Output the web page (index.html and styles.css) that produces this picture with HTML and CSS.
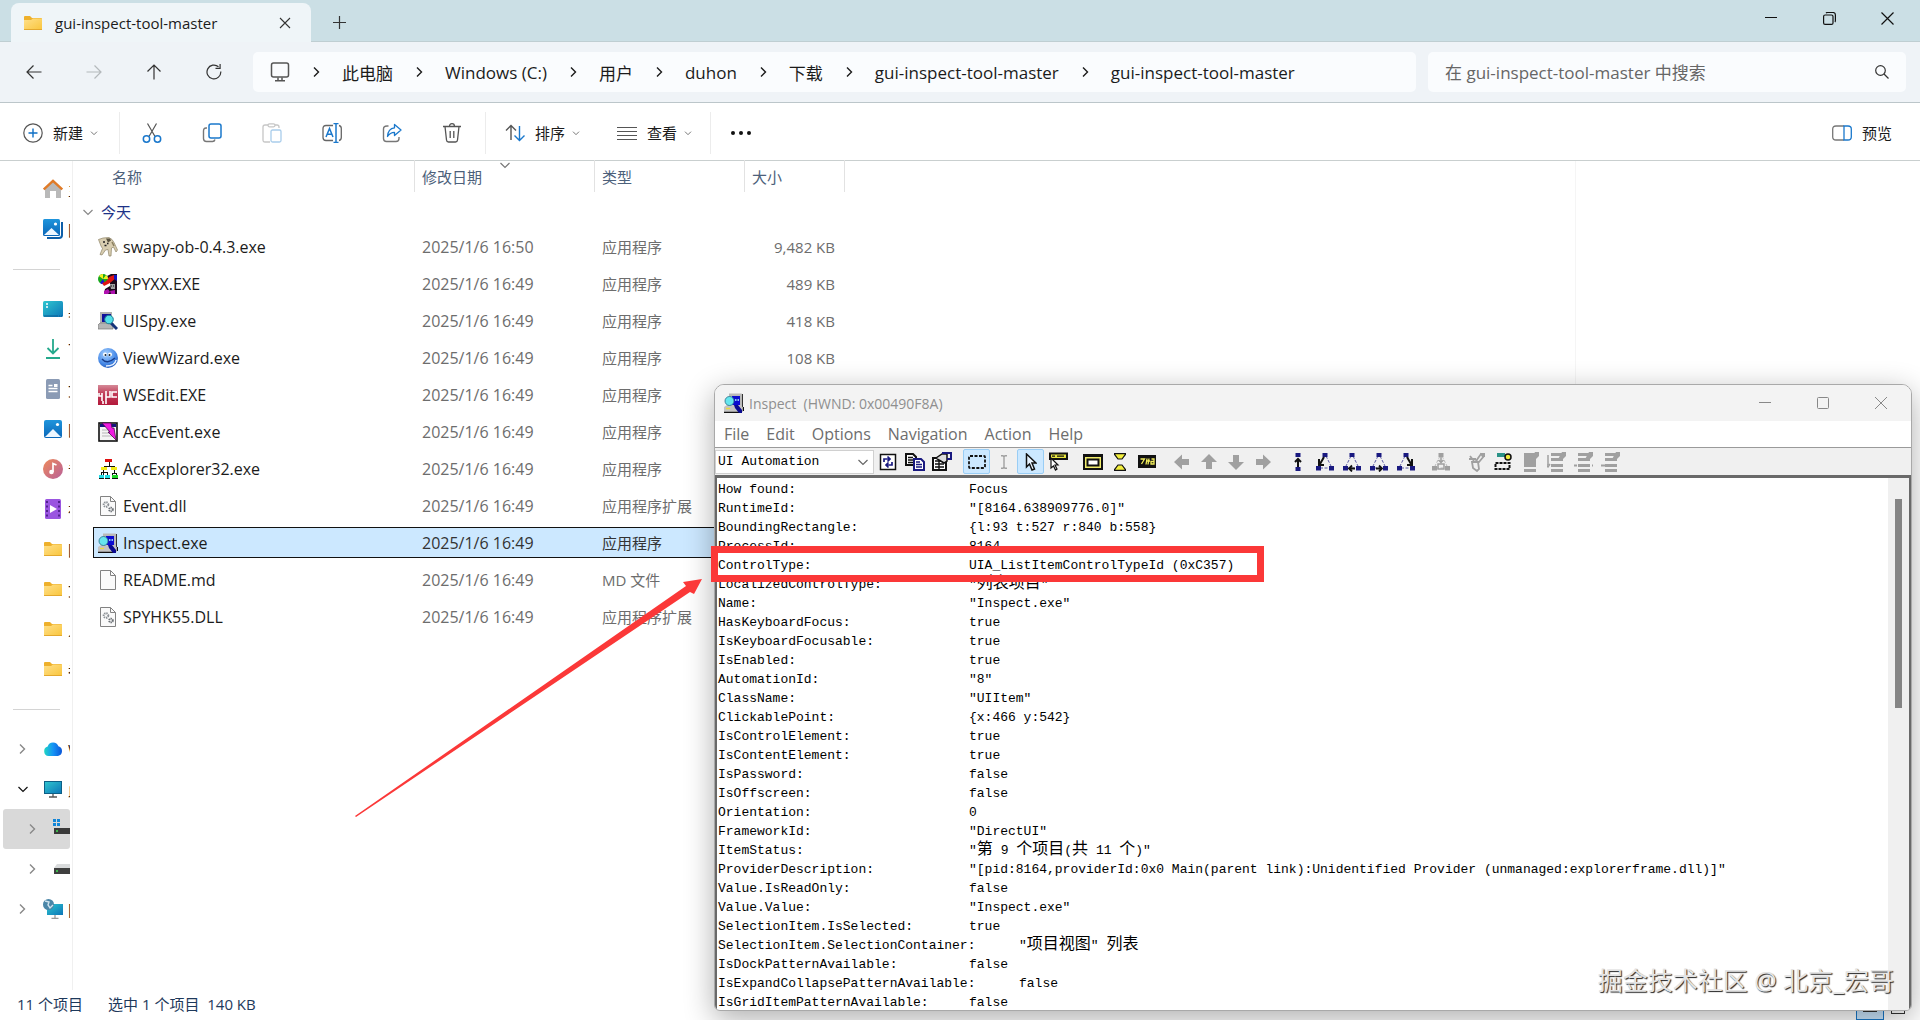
FILE: index.html
```html
<!DOCTYPE html>
<html lang="zh-CN">
<head>
	<meta charset="utf-8">
	<title>gui-inspect-tool-master</title>
	<link rel="stylesheet" href="styles.css">
</head>
<body>

<!-- shared icons -->
<svg class="defs" width="0" height="0">
	<defs>
		<linearGradient id="gFolder" x1="0" y1="0" x2="1" y2="1"><stop offset="0" stop-color="#ffe08a"/><stop offset="1" stop-color="#f9c53c"/></linearGradient>
		<linearGradient id="gBlue" x1="0" y1="0" x2="0" y2="1"><stop offset="0" stop-color="#1f95dc"/><stop offset="1" stop-color="#0a66b8"/></linearGradient>
		<linearGradient id="gTeal" x1="0" y1="0" x2="1" y2="1"><stop offset="0" stop-color="#2fc6cf"/><stop offset="1" stop-color="#0c76b8"/></linearGradient>
		<linearGradient id="gMusic" x1="0" y1="0" x2="1" y2="1"><stop offset="0" stop-color="#ee8a5a"/><stop offset="1" stop-color="#b8609a"/></linearGradient>
		<linearGradient id="gCloud" x1="0" y1="0" x2="1" y2="0"><stop offset="0" stop-color="#1fd6c4"/><stop offset=".5" stop-color="#1593f5"/><stop offset="1" stop-color="#0a56d8"/></linearGradient>
		<linearGradient id="gRed" x1="0" y1="0" x2="0" y2="1"><stop offset="0" stop-color="#d58a98"/><stop offset=".45" stop-color="#c03a56"/><stop offset="1" stop-color="#b3193b"/></linearGradient>
		<radialGradient id="gFace" cx=".4" cy=".3" r=".8"><stop offset="0" stop-color="#a9d3ff"/><stop offset=".6" stop-color="#4a8ce8"/><stop offset="1" stop-color="#1c50b0"/></radialGradient>
	</defs>
	<symbol id="folder" viewBox="0 0 20 20"><path d="M1 4q0-1 1-1h5l2 2h9q1 0 1 1v4H1z" fill="#eeb02b"/><path d="M1 7h7l2-1.500h9V17H1z" fill="url(#gFolder)"/><path d="M1 16.500h18" stroke="#e3a82e"/></symbol>
	<symbol id="picture" viewBox="0 0 20 20"><rect x="1" y="1" width="18" height="18" rx="2" fill="url(#gBlue)"/><path d="M2 18l8-8 8 8z" fill="#eef7ff"/><circle cx="14.500" cy="5.500" r="1.600" fill="#fff"/></symbol>
	<symbol id="chev-r" viewBox="0 0 10 12"><path d="M3 1.500L7.500 6 3 10.500" fill="none" stroke="currentColor" stroke-width="1.400"/></symbol>
	<symbol id="chev-d" viewBox="0 0 12 10"><path d="M1.500 3L6 7.500 10.500 3" fill="none" stroke="currentColor" stroke-width="1.200"/></symbol>
	<symbol id="dll" viewBox="0 0 20 20"><path d="M2.500.500h10l5 5v14h-15z" fill="#fafafa" stroke="#828282"/><path d="M12.500.500v5h5" fill="none" stroke="#828282"/><circle cx="8" cy="8.500" r="2.300" fill="none" stroke="#8c9196" stroke-width="2" stroke-dasharray="1.300 .700"/><circle cx="13" cy="13.500" r="1.800" fill="none" stroke="#6d7277" stroke-width="2" stroke-dasharray="1.200 .600"/></symbol>
	<symbol id="inspect" viewBox="0 0 20 20"><path d="M5 .5h12.500l1 1V14H5z" fill="#b9b9b9"/><path d="M18.500 1v13" stroke="#333"/><path d="M8 3h8v9H8z" fill="#0b0bd0"/><path d="M0 14l3-2h14l2 3v4H0z" fill="#c4c4c4"/><path d="M0 19.400h16M19.400 14v4" fill="none" stroke="#111" stroke-width="1.200"/><path d="M2 15.500h4" stroke="#e8dc40" stroke-width="1.300"/><path d="M10 12h4l4 5v3h-3l-4-5z" fill="#0a0a90"/><circle cx="5.500" cy="8" r="4.500" fill="#65e6ee" stroke="#2a6e86" stroke-width=".8"/><path d="M11 7h1.500m1 0H15" stroke="#bff" stroke-width="1.500"/></symbol>
	<symbol id="tree" viewBox="0 0 18 20"><path d="M8 4L3 14M10 4l5 10M4 16h10" fill="none" stroke="currentColor" stroke-dasharray="3 1.500" opacity=".7"/><path d="M6.500 1h5v4h-5zM0 14h5v4.500H0zM13 14h5v4.500h-5z" fill="currentColor"/></symbol>
	<symbol id="pen-list" viewBox="0 0 20 20"><path d="M4 1h12v3H4zM4 6h12v3H4zM4 12h12v3H4zM4 17h12v3H4z" fill="#a0a0a0"/><path d="M10 9l5-9h4v4l-5 5z" fill="#a0a0a0"/></symbol>
</svg>

<header class="tabstrip">
	<div class="tab">
		<svg width="20" height="20"><use href="#folder"/></svg>
		<span class="tab-title">gui-inspect-tool-master</span>
		<button class="tab-close" aria-label="关闭标签页"><svg width="12" height="12" viewBox="0 0 12 12"><path d="M1 1l10 10M11 1L1 11" stroke="#333" stroke-width="1.100"/></svg></button>
	</div>
	<button class="tab-new" aria-label="新标签页"><svg width="13" height="13" viewBox="0 0 13 13"><path d="M6.500 0v13M0 6.500h13" stroke="#333" stroke-width="1.200"/></svg></button>
	<div class="win-buttons">
		<button aria-label="最小化"><svg width="12" height="12" viewBox="0 0 12 12"><path d="M0 5.500h12" stroke="#111"/></svg></button>
		<button aria-label="还原"><svg width="13" height="13" viewBox="0 0 13 13" fill="none" stroke="#111" stroke-width="1.200"><rect x=".6" y="3" width="9.400" height="9.400" rx="1.500"/><path d="M3 1q.5-.5 1.500-.5h5.500q2.400 0 2.400 2.400V8.500q0 1-.5 1.500"/></svg></button>
		<button aria-label="关闭"><svg width="13" height="13" viewBox="0 0 13 13"><path d="M.5.500l12 12M12.500.500l-12 12" stroke="#111" stroke-width="1.200"/></svg></button>
	</div>
</header>

<nav class="navbar">
	<button class="nav-btn" aria-label="后退"><svg width="16" height="16" viewBox="0 0 16 16" fill="none" stroke="#333" stroke-width="1.200"><path d="M15.500 8H1M7.500 1.500L1 8l6.500 6.500"/></svg></button>
	<button class="nav-btn" aria-label="前进"><svg width="16" height="16" viewBox="0 0 16 16" fill="none" stroke="#b4b9bc" stroke-width="1.200"><path d="M.5 8H15M8.500 1.500L15 8l-6.500 6.500"/></svg></button>
	<button class="nav-btn" aria-label="向上"><svg width="16" height="16" viewBox="0 0 16 16" fill="none" stroke="#333" stroke-width="1.200"><path d="M8 15.500V1M1.500 7.500L8 1l6.500 6.500"/></svg></button>
	<button class="nav-btn" aria-label="刷新"><svg width="16" height="16" viewBox="0 0 16 16" fill="none" stroke="#333" stroke-width="1.200"><path d="M14.800 7.500A6.900 6.900 0 1 1 12.500 2.800M9.500 4.300h4.600V0"/></svg></button>
	<div class="address">
		<svg class="pc" width="20" height="20" viewBox="0 0 20 20" fill="none" stroke="#555" stroke-width="1.500"><rect x="1.500" y="1" width="17" height="14" rx="2"/><path d="M8 15.500v3M12 15.500v3M5 18.700h10"/></svg>
		<svg width="10" height="12"><use href="#chev-r"/></svg>
		<a href="#">此电脑</a>
		<svg width="10" height="12"><use href="#chev-r"/></svg>
		<a href="#">Windows (C:)</a>
		<svg width="10" height="12"><use href="#chev-r"/></svg>
		<a href="#">用户</a>
		<svg width="10" height="12"><use href="#chev-r"/></svg>
		<a href="#">duhon</a>
		<svg width="10" height="12"><use href="#chev-r"/></svg>
		<a href="#">下载</a>
		<svg width="10" height="12"><use href="#chev-r"/></svg>
		<a href="#">gui-inspect-tool-master</a>
		<svg width="10" height="12"><use href="#chev-r"/></svg>
		<a href="#">gui-inspect-tool-master</a>
	</div>
	<div class="search">
		<input type="text" aria-label="搜索" placeholder="在 gui-inspect-tool-master 中搜索">
		<svg width="14" height="14" viewBox="0 0 14 14" fill="none" stroke="#333" stroke-width="1.200"><circle cx="5.500" cy="5.500" r="4.800"/><path d="M9 9l4.500 4.500"/></svg>
	</div>
</nav>

<div class="commands">
	<button class="cmd new"><svg width="20" height="20" viewBox="0 0 20 20" fill="none"><circle cx="10" cy="10" r="9.200" stroke="#555" stroke-width="1.200"/><path d="M10 5.500v9M5.500 10h9" stroke="#0f6fc5" stroke-width="1.400"/></svg>新建<svg class="arr" width="8" height="8"><use href="#chev-d"/></svg></button>
	<span class="sep"></span>
	<button class="tool" aria-label="剪切"><svg width="20" height="22" viewBox="0 0 20 20" fill="none"><path d="M5.500.500l7.500 13M14.500.500L7 13.500" stroke="#555" stroke-width="1.200"/><circle cx="4.500" cy="16" r="3.200" stroke="#1a78cc" stroke-width="1.500"/><circle cx="15.500" cy="16" r="3.200" stroke="#1a78cc" stroke-width="1.500"/></svg></button>
	<button class="tool" aria-label="复制"><svg width="20" height="20" viewBox="0 0 20 20" fill="none"><path d="M5 5H4Q1.500 5 1.500 8v7.500q0 3 3 3h6q2 0 2.500-2" stroke="#777" stroke-width="1.400"/><rect x="7" y="1" width="12" height="14" rx="2" stroke="#1a78cc" stroke-width="1.500"/></svg></button>
	<button class="tool" aria-label="粘贴"><svg width="20" height="20" viewBox="0 0 20 20" fill="none" stroke-width="1.300"><path d="M8 19H3q-2 0-2-2V4q0-2 2-2h3M13 2h2q2 0 2 2v1" stroke="#c6c6c6"/><rect x="6" y=".8" width="7" height="3" rx="1.500" stroke="#c6c6c6"/><rect x="9" y="7" width="10" height="12" rx="1.500" stroke="#a9cdeb"/></svg></button>
	<button class="tool" aria-label="重命名"><svg width="20" height="20" viewBox="0 0 20 20" fill="none"><path d="M11 2.500H4q-3 0-3 3v9q0 3 3 3h7M17 2.500q2.300.5 2.300 3v9q0 2.500-2.300 3" stroke="#666" stroke-width="1.300"/><path d="M14 .500v19M11.500.600h5M11.500 19.400h5" stroke="#1a78cc" stroke-width="1.500"/><path d="M4 14L7.500 5.500 11 14M5.200 11.200h4.600" stroke="#1a78cc" stroke-width="1.500"/></svg></button>
	<button class="tool" aria-label="共享"><svg width="20" height="20" viewBox="0 0 20 20" fill="none"><path d="M6.500 3H5Q1.500 3 1.500 6v9.500q0 3 3 3h9.500q3 0 3-3V14" stroke="#777" stroke-width="1.400"/><path d="M12.500 1.500L19 7l-6.500 5.500V9.300Q8 9.300 5.500 13.500 6 5.500 12.500 4.800z" stroke="#1a78cc" stroke-width="1.300" stroke-linejoin="round"/></svg></button>
	<button class="tool" aria-label="删除"><svg width="20" height="20" viewBox="0 0 20 20" fill="none" stroke="#555" stroke-width="1.300"><path d="M1 3.500h18M7.500 3.500q0-2.800 2.500-2.800t2.500 2.800M3 3.500L4.500 17q.2 2 2 2h7q1.800 0 2-2L17 3.500M8.200 8v7M11.800 8v7"/></svg></button>
	<span class="sep"></span>
	<button class="cmd"><svg width="20" height="20" viewBox="0 0 20 20" fill="none" stroke-width="1.400"><path d="M6 17V3M1 7.500l5-5 5 5" stroke="#555"/><path d="M14.500 3v14M9.500 12.500l5 5 5-5" stroke="#1a78cc"/></svg>排序<svg class="arr" width="8" height="8"><use href="#chev-d"/></svg></button>
	<button class="cmd"><svg width="20" height="20" viewBox="0 0 20 20" stroke="#555"><path d="M0 4.500h20M0 8.500h20M0 12.500h20M0 16.500h20"/></svg>查看<svg class="arr" width="8" height="8"><use href="#chev-d"/></svg></button>
	<span class="sep"></span>
	<button class="tool" aria-label="更多"><svg width="22" height="20" viewBox="0 0 22 20" fill="#111"><circle cx="3" cy="10" r="2"/><circle cx="11" cy="10" r="2"/><circle cx="19" cy="10" r="2"/></svg></button>
	<button class="cmd preview"><svg width="20" height="20" viewBox="0 0 20 20" fill="none" stroke-width="1.300"><path d="M12 3H4Q.700 3 .700 6v8q0 3 3.300 3h8" stroke="#777"/><path d="M12 3h4q3.300 0 3.300 3v8q0 3-3.300 3h-4z" stroke="#1a78cc"/></svg>预览</button>
</div>

<main class="explorer">
	<aside class="sidebar">
		<a href="#" class="place"><svg width="20" height="20" viewBox="0 0 20 20"><path d="M2 9l8-7 8 7v10h-5v-7H7v7H2z" fill="#b9b9b9"/><path d="M.8 10.500L10 1.800l9.200 8.700" fill="none" stroke="#e07b28" stroke-width="2.400"/></svg><span>主页</span></a>
		<a href="#" class="place"><svg width="20" height="20" viewBox="0 0 20 20"><path d="M4 19h12q3 0 3-3V3" fill="none" stroke="#0d5ea8" stroke-width="2"/><rect x="0" y="0" width="17" height="17" rx="1.500" fill="url(#gBlue)"/><path d="M1 16l7.500-7 7.500 7z" fill="#eef7ff"/><circle cx="12.500" cy="5" r="1.600" fill="#fff"/></svg><span>图库</span></a>
		<hr>
		<a href="#" class="place"><svg width="20" height="20" viewBox="0 0 20 20"><rect x="0" y="2" width="20" height="16" rx="1.500" fill="url(#gTeal)"/><path d="M3 5h2M3 8h2" stroke="#fff" stroke-width="1.600"/><path d="M1 17h18" stroke="#0c5a94" stroke-dasharray="14 1 1 1"/></svg><span>桌面</span></a>
		<a href="#" class="place"><svg width="20" height="20" viewBox="0 0 20 20" fill="none" stroke="#25a98c" stroke-width="1.800"><path d="M10 0v14M4.500 9L10 14.500 15.500 9M3 19h14"/></svg><span>下载</span></a>
		<a href="#" class="place"><svg width="20" height="20" viewBox="0 0 20 20"><rect x="3" y="0" width="14" height="20" rx="1.500" fill="#8b9bb5"/><path d="M5.500 6.500h4M5.500 9.500h9M5.500 12.500h9" stroke="#fff" stroke-width="1.300"/><rect x="11" y="5" width="3.500" height="3" fill="#fff"/></svg><span>文档</span></a>
		<a href="#" class="place"><svg width="20" height="20"><use href="#picture"/></svg><span>图片</span></a>
		<a href="#" class="place"><svg width="20" height="20" viewBox="0 0 20 20"><circle cx="10" cy="10" r="10" fill="url(#gMusic)"/><path d="M10 13V4.500l3.500 1.500" fill="none" stroke="#fff" stroke-width="1.700"/><circle cx="8.500" cy="13" r="2.300" fill="#fff"/></svg><span>音乐</span></a>
		<a href="#" class="place"><svg width="20" height="20" viewBox="0 0 20 20"><rect x="2" y="0" width="16" height="20" rx="1.500" fill="#9a55e0"/><path d="M4 2v17M16 2v17" stroke="#4a1f86" stroke-width="1.800" stroke-dasharray="2 2.500"/><path d="M7 6l7 4-7 4z" fill="#fff"/></svg><span>视频</span></a>
		<a href="#" class="place"><svg width="20" height="20"><use href="#folder"/></svg><span>图</span></a>
		<a href="#" class="place"><svg width="20" height="20"><use href="#folder"/></svg><span>文</span></a>
		<a href="#" class="place"><svg width="20" height="20"><use href="#folder"/></svg><span>人</span></a>
		<a href="#" class="place"><svg width="20" height="20"><use href="#folder"/></svg><span>者</span></a>
		<hr>
		<a href="#" class="place open"><svg class="tw" width="10" height="12"><use href="#chev-r"/></svg><svg width="20" height="20" viewBox="0 0 20 20"><path d="M5.500 17a4.800 4.800 0 0 1-.8-9.400 5.600 5.600 0 0 1 10.700-.3A5 5 0 0 1 15 17z" fill="url(#gCloud)"/></svg><span>WPS</span></a>
		<a href="#" class="place open"><svg class="tw dark" width="12" height="10"><use href="#chev-d"/></svg><svg width="20" height="20" viewBox="0 0 20 20"><rect x="1.500" y="2.500" width="17" height="12" fill="url(#gTeal)" stroke="#0d5f86"/><path d="M10 15v2.500M6 18h8" stroke="#555" stroke-width="1.300"/></svg><span>此电脑</span></a>
		<a href="#" class="place open deep current"><svg class="tw" width="10" height="12"><use href="#chev-r"/></svg><svg width="20" height="20" viewBox="0 0 20 20"><path d="M0 0h3v3H0zM4 0h3v3H4zM0 4h3v3H0zM4 4h3v3H4z" fill="#1286d8"/><path d="M1 9h19v6H1z" fill="#3a3a3a"/><path d="M3 12h2" stroke="#3fe052" stroke-width="1.500"/></svg><span>C</span></a>
		<a href="#" class="place open deep"><svg class="tw" width="10" height="12"><use href="#chev-r"/></svg><svg width="20" height="20" viewBox="0 0 20 20"><path d="M4 5h16v4H1z" fill="#d9dbdc"/><path d="M1 9h19v6H1z" fill="#3f3f3f"/><path d="M3 12h2" stroke="#3fe052" stroke-width="1.500"/></svg><span>D</span></a>
		<a href="#" class="place open"><svg class="tw" width="10" height="12"><use href="#chev-r"/></svg><svg width="20" height="20" viewBox="0 0 20 20"><rect x="4" y="5" width="16" height="11" fill="url(#gTeal)"/><path d="M12 16v3M8.500 19.300h7" stroke="#999" stroke-width="1.300"/><circle cx="5.500" cy="5.500" r="5.500" fill="#4b86a8"/><path d="M2 2l4 1-1 3 2 3 3-3" fill="none" stroke="#cfe3ee" stroke-width="1.400"/></svg><span>网络</span></a>
	</aside>

	<section class="files">
		<table class="list">
			<colgroup><col class="c-gut"><col class="c-name"><col class="c-date"><col class="c-type"><col class="c-size"></colgroup>
			<thead>
				<tr><td></td><th class="h-name">名称</th><th class="sorted"><svg class="sort" width="12" height="10"><use href="#chev-d"/></svg>修改日期</th><th>类型</th><th>大小</th></tr>
			</thead>
			<tbody>
				<tr class="group"><td colspan="5"><button><svg width="12" height="10"><use href="#chev-d"/></svg>今天</button></td></tr>
				<tr><td></td><td class="name"><svg width="20" height="20" viewBox="0 0 20 20"><path d="M.5 2.500L5 1l6-.5 3 2 2 3 3.500 7.500-1.500 2-2.500-5-2 1-.5 8H11l-1-6.500-2.500.5L4 18l-2-.5 2.500-6L3 9z" fill="#d8cdb0" stroke="#8d8266" stroke-width=".7"/><path d="M8 1.500h4l1 2-3 2z" fill="#57503e"/><path d="M5 5h2M9 6.500h1.500M6.500 8.500h2" stroke="#222" stroke-width="1.500"/><path d="M14 5l2 4" stroke="#8a7f60" stroke-width="1.500"/></svg>swapy-ob-0.4.3.exe</td><td>2025/1/6 16:50</td><td class="zh">应用程序</td><td class="size">9,482 KB</td></tr>
				<tr><td></td><td class="name"><svg width="20" height="20" viewBox="0 0 20 20"><path d="M9 2l4-2h6v20H6l1-5 5-3V7z" fill="#1c0a1c"/><circle cx="5" cy="5" r="5" fill="#17a81c"/><path d="M5 5L1 2a5 5 0 0 1 4-2zM5 5h5a5 5 0 0 0-2-4z" fill="#f5ee20"/><path d="M5 5L2 9a5 5 0 0 0 5 1z" fill="#1616d8"/><path d="M4 9q5-1 7-6l5-2 2 3-6 5-6 3z" fill="#e01414"/><path d="M6 17l4-2 2 3-2 2H6zM12 17l5-1v4h-4z" fill="#b012b0"/><path d="M16 1h3v6l-3-2z" fill="#1414c0"/><path d="M12 10h5v5h-4z" fill="#a0a0a0"/><path d="M13 12h1m1 0h1" stroke="#111"/></svg>SPYXX.EXE</td><td>2025/1/6 16:49</td><td class="zh">应用程序</td><td class="size">489 KB</td></tr>
				<tr><td></td><td class="name"><svg width="20" height="20" viewBox="0 0 20 20"><path d="M2 1h12v11H2z" fill="#b0b0b0"/><path d="M4 3h9v8H4z" fill="#10109c"/><path d="M0 14l2-2h13v6H0z" fill="#b5b5b5" stroke="#777" stroke-width=".7"/><path d="M13 12l6 6" stroke="#15337a" stroke-width="3"/><circle cx="11" cy="8.500" r="4.300" fill="#53dfe8" stroke="#1b7a92"/></svg>UISpy.exe</td><td>2025/1/6 16:49</td><td class="zh">应用程序</td><td class="size">418 KB</td></tr>
				<tr><td></td><td class="name"><svg width="20" height="20" viewBox="0 0 20 20"><circle cx="10" cy="10" r="10" fill="url(#gFace)"/><circle cx="7" cy="6.500" r="2" fill="#fff"/><circle cx="12" cy="6.500" r="2" fill="#fff"/><circle cx="7.500" cy="7" r="1" fill="#123"/><circle cx="11.500" cy="7" r="1" fill="#123"/><path d="M4 11q5 6 13-1" fill="none" stroke="#173c8a" stroke-width="1.400"/><path d="M8 18q9 0 10-6" fill="none" stroke="#e8f2ff" stroke-width="1.500"/></svg>ViewWizard.exe</td><td>2025/1/6 16:49</td><td class="zh">应用程序</td><td class="size">108 KB</td></tr>
				<tr><td></td><td class="name"><svg width="20" height="20" viewBox="0 0 20 20"><rect width="20" height="20" fill="url(#gRed)"/><path d="M1 8v3h3v3M4 8v8M8 6v6h4V6M8 12v7M19 7h-5v5h5M5 16v3" fill="none" stroke="#fff" stroke-width="1.600"/></svg>WSEdit.EXE</td><td>2025/1/6 16:49</td><td class="zh">应用程序</td><td class="size"></td></tr>
				<tr><td></td><td class="name"><svg width="20" height="20" viewBox="0 0 20 20"><rect x="1" y="1" width="18" height="18" fill="#f4f4f4" stroke="#111" stroke-width="1.600"/><path d="M2 2h16v3H2z" fill="#14147e"/><path d="M4 8h7M4 11h9M4 14h11" stroke="#b5b5b5"/><path d="M4 1h9l1 5h2l2 12-8-8h2z" fill="#f01ae0" stroke="#510a50" stroke-width=".8"/></svg>AccEvent.exe</td><td>2025/1/6 16:49</td><td class="zh">应用程序</td><td class="size"></td></tr>
				<tr><td></td><td class="name"><svg width="20" height="20" viewBox="0 0 20 20" shape-rendering="crispEdges"><path d="M11 3v4M6 10V7h10v3M5 11v5M3 16v-3h6v3M16 11v3M14 16v-2h4v2" fill="none" stroke="#111"/><path d="M7 0h7v3H7z" fill="#e01010"/><path d="M3 8h6v3H3zM13 8h6v3h-6z" fill="#f2ea18"/><path d="M1 16h5v3H1zM7 16h5v3H7z" fill="#22dbe6"/><path d="M14 16h6v3h-6z" fill="#20d828"/><path d="M1 19h5M7 19h5M14 19h6" stroke="#111"/></svg>AccExplorer32.exe</td><td>2025/1/6 16:49</td><td class="zh">应用程序</td><td class="size"></td></tr>
				<tr><td></td><td class="name"><svg width="20" height="20"><use href="#dll"/></svg>Event.dll</td><td>2025/1/6 16:49</td><td class="zh">应用程序扩展</td><td class="size"></td></tr>
				<tr class="selected"><td></td><td class="name"><svg width="20" height="20"><use href="#inspect"/></svg>Inspect.exe</td><td>2025/1/6 16:49</td><td class="zh">应用程序</td><td class="size"></td></tr>
				<tr><td></td><td class="name"><svg width="20" height="20" viewBox="0 0 20 20"><path d="M2.500.500h10l5 5v14h-15z" fill="#fafafa" stroke="#828282"/><path d="M12.500.500v5h5" fill="none" stroke="#828282"/></svg>README.md</td><td>2025/1/6 16:49</td><td class="zh">MD 文件</td><td class="size"></td></tr>
				<tr><td></td><td class="name"><svg width="20" height="20"><use href="#dll"/></svg>SPYHK55.DLL</td><td>2025/1/6 16:49</td><td class="zh">应用程序扩展</td><td class="size"></td></tr>
			</tbody>
		</table>
	</section>
	<div class="preview-pane"></div>
</main>

<footer class="status">
	<span>11 个项目</span>
	<span>选中 1 个项目&nbsp; 140 KB</span>
	<div class="views">
		<button class="on" aria-label="详细信息"><svg width="14" height="12" viewBox="0 0 14 12"><path d="M0 1.500h14M0 5.500h14M0 9.500h14" stroke="#333"/></svg></button>
		<button aria-label="大图标"><svg width="14" height="12" viewBox="0 0 14 12"><rect x=".5" y=".5" width="13" height="11" fill="none" stroke="#333"/></svg></button>
	</div>
</footer>

<!-- floating Inspect window -->
<section class="inspect">
	<header class="i-title">
		<svg width="20" height="20"><use href="#inspect"/></svg>
		<span>Inspect&nbsp; (HWND: 0x00490F8A)</span>
		<div class="win-buttons">
			<button aria-label="最小化"><svg width="12" height="12" viewBox="0 0 12 12"><path d="M0 5.500h12" stroke="#888"/></svg></button>
			<button aria-label="最大化"><svg width="12" height="12" viewBox="0 0 12 12"><rect x=".5" y=".5" width="11" height="11" rx="1" fill="none" stroke="#888"/></svg></button>
			<button aria-label="关闭"><svg width="12" height="12" viewBox="0 0 12 12"><path d="M0 0l12 12M12 0L0 12" stroke="#888"/></svg></button>
		</div>
	</header>
	<div class="i-menu">
		<button>File</button><button>Edit</button><button>Options</button><button>Navigation</button><button>Action</button><button>Help</button>
	</div>
	<div class="i-tools">
		<div class="combo">
			<select aria-label="模式"><option>UI Automation</option></select>
			<svg width="12" height="10"><use href="#chev-d"/></svg>
		</div>
		<button aria-label="Refresh"><svg width="18" height="18" viewBox="0 0 18 18"><rect x="1.500" y="1.500" width="15" height="15" fill="#fff" stroke="#111" stroke-width="1.500"/><path d="M5 9V6h5M8.500 3.500L11 6 8.500 8.500M13 9v3H8M9.500 9.500L7 12l2.500 2.500" fill="none" stroke="#191980" stroke-width="1.700"/></svg></button>
		<button aria-label="Copy"><svg width="20" height="18" viewBox="0 0 20 18"><path d="M1 1h7l3 3v8H1z" fill="#fff" stroke="#111" stroke-width="2"/><path d="M3 4.500h5M3 7h5M3 9.500h5" stroke="#111" stroke-width="1.300"/><path d="M9 6h7l3 3v8H9z" fill="#fff" stroke="#191980" stroke-width="2"/><path d="M11 9h4M11 11.500h6M11 14h6" stroke="#191980" stroke-width="1.300"/></svg></button>
		<button aria-label="Properties"><svg width="20" height="20" viewBox="0 0 20 20"><rect x="1" y="6" width="13" height="12" fill="#fff" stroke="#111" stroke-width="2"/><path d="M3 9h9M3 12h9M3 15h9M7 7v11" stroke="#111" stroke-width="1.400"/><path d="M4 6l6-4h5v7l-3 2-5-3z" fill="#ddd" stroke="#111" stroke-width="1.500"/><path d="M10 1h9v6h-4" fill="none" stroke="#191980" stroke-width="2"/></svg></button>
		<i class="gap"></i>
		<button class="on" aria-label="Show highlight rectangle"><svg width="18" height="14" viewBox="0 0 18 14"><rect x="1" y="1" width="16" height="12" rx="1" fill="none" stroke="#111" stroke-width="1.800" stroke-dasharray="3 1.500"/></svg></button>
		<button aria-label="Show caret"><svg width="8" height="14" viewBox="0 0 8 14"><path d="M1 .700h2l1 1 1-1h2M4 1.500v11M1 13.300h2l1-1 1 1h2" fill="none" stroke="#a0a0a0" stroke-width="1.400"/></svg></button>
		<button class="on" aria-label="Watch cursor"><svg width="12" height="18" viewBox="0 0 12 18"><path d="M1.500 1v13l3-3 2.500 6 2.500-1-2.500-6h4z" fill="#e8f4ff" stroke="#111" stroke-width="1.500"/></svg></button>
		<button aria-label="Watch tooltips"><svg width="20" height="20" viewBox="0 0 20 20"><path d="M2 1.500h17v5.500H2z" fill="#e8e640" stroke="#111" stroke-width="2"/><path d="M4 4.200h3M9 4.200h7" stroke="#111" stroke-width="1.300"/><path d="M3 6v10l2.500-2 2 4 1.500-1-2-4h3z" fill="#fff" stroke="#111" stroke-width="1.200"/></svg></button>
		<i class="gap"></i>
		<button aria-label="Show window"><svg width="20" height="16" viewBox="0 0 20 16"><path d="M0 0h20v16H0z" fill="#111"/><path d="M2 3h16v11H2z" fill="#f2ee6c"/><rect x="4.500" y="5.500" width="11" height="6" fill="#fff" stroke="#111" stroke-width="2"/></svg></button>
		<button aria-label="Topmost"><svg width="12" height="18" viewBox="0 0 12 18"><path d="M0 .700h12L8 6H4zM0 17.300h12L8 12H4z" fill="#f2ee3c" stroke="#111" stroke-width="1.200"/></svg></button>
		<button aria-label="Information"><svg width="18" height="13" viewBox="0 0 18 13"><path d="M0 0h18v13H0z" fill="#111"/><path d="M2.500 4h4l-3 5M9 3.500L8 9.500M11 3.500l-1 6M8 6h4M13.500 4H16v5h-3V6.500h3" fill="none" stroke="#f2ee5c" stroke-width="1.300"/></svg></button>
		<i class="gap"></i>
		<button aria-label="Back"><svg width="16" height="16" viewBox="0 0 16 16"><path d="M0 8l8-7.500V5h7v6H8v4.500z" fill="#a0a0a0"/></svg></button>
		<button aria-label="Up"><svg width="16" height="16" viewBox="0 0 16 16"><path d="M8 0l8 8h-5v7H5V8H0z" fill="#a0a0a0"/></svg></button>
		<button aria-label="Down"><svg width="16" height="16" viewBox="0 0 16 16"><path d="M8 16L0 8h5V1h6v7h5z" fill="#a0a0a0"/></svg></button>
		<button aria-label="Forward"><svg width="16" height="16" viewBox="0 0 16 16"><path d="M16 8L8 .500V5H1v6h7v4.500z" fill="#a0a0a0"/></svg></button>
		<i class="gap"></i>
		<button aria-label="Parent"><svg width="18" height="20" viewBox="0 0 18 20"><path d="M6.500 1h5v4h-5zM6.500 15h5v4h-5z" fill="#191980"/><path d="M9 15V7M6 10l3-3 3 3" fill="none" stroke="#111" stroke-width="2"/></svg></button>
		<button class="navy" aria-label="First child"><svg width="18" height="20" viewBox="0 0 18 20"><use href="#tree"/><path d="M8 5l-4 7M3 7v6h5" fill="none" stroke="#111" stroke-width="2"/></svg></button>
		<button class="navy" aria-label="Previous sibling"><svg width="18" height="20" viewBox="0 0 18 20"><use href="#tree"/><path d="M12 16.500H6M9 13.500l-3 3 3 3" fill="none" stroke="#111" stroke-width="1.800"/></svg></button>
		<button class="navy" aria-label="Next sibling"><svg width="18" height="20" viewBox="0 0 18 20"><use href="#tree"/><path d="M6 16.500h6M9 13.500l3 3-3 3" fill="none" stroke="#111" stroke-width="1.800"/></svg></button>
		<button class="navy" aria-label="Last child"><svg width="18" height="20" viewBox="0 0 18 20"><use href="#tree"/><path d="M10 5l4 7M15 7v6h-5" fill="none" stroke="#111" stroke-width="2"/></svg></button>
		<i class="gap"></i>
		<button class="dim" aria-label="Tree"><svg width="20" height="20" viewBox="0 0 18 20"><use href="#tree"/><path d="M9 5v5M6.500 8L9 10.500 11.500 8M6 12h6v5H6z" fill="none" stroke="#a0a0a0" stroke-width="1.500"/></svg></button>
		<i class="gap"></i>
		<button aria-label="Invoke"><svg width="18" height="20" viewBox="0 0 18 20"><path d="M2 7h7M3 4l4 5M5 10l1 6 4 3 2-2-1-7zM9 9l5-7 3 2-5 6z" fill="none" stroke="#a0a0a0" stroke-width="1.800"/><path d="M13 1h5v4h-3z" fill="#a0a0a0"/></svg></button>
		<button aria-label="Set focus"><svg width="18" height="20" viewBox="0 0 18 20"><path d="M3 1h8v4H3z" fill="#2b9387"/><circle cx="14" cy="5" r="3" fill="#f2ee3c" stroke="#111" stroke-width="1.500"/><rect x="1.500" y="11" width="14" height="6" fill="none" stroke="#111" stroke-width="2" stroke-dasharray="3 1"/></svg></button>
		<button aria-label="Select"><svg width="20" height="20" viewBox="0 0 20 20"><path d="M4 3h12v12H4z" fill="#a0a0a0"/><use href="#pen-list"/></svg></button>
		<button aria-label="Extend selection"><svg width="20" height="20" viewBox="0 0 20 20"><use href="#pen-list"/><path d="M1 3v10M-1 12l2 3 2-3" stroke="#a0a0a0" fill="none" stroke-width="1.500"/></svg></button>
		<button aria-label="Add to selection"><svg width="20" height="20" viewBox="0 0 20 20"><use href="#pen-list"/><path d="M0 13.500h3M18 13.500h1" stroke="#a0a0a0" stroke-width="2"/></svg></button>
		<button aria-label="Remove from selection"><svg width="20" height="20" viewBox="0 0 20 20"><use href="#pen-list"/><path d="M0 13.500h4" stroke="#a0a0a0" stroke-width="2"/></svg></button>
	</div>
	<div class="i-body">
		<table class="props">
			<colgroup><col class="p-key"><col></colgroup>
			<tbody>
				<tr><th>How found:</th><td>Focus</td></tr>
				<tr><th>RuntimeId:</th><td>"[8164.638909776.0]"</td></tr>
				<tr><th>BoundingRectangle:</th><td>{l:93 t:527 r:840 b:558}</td></tr>
				<tr><th>ProcessId:</th><td>8164</td></tr>
				<tr><th>ControlType:</th><td>UIA_ListItemControlTypeId (0xC357)</td></tr>
				<tr><th>LocalizedControlType:</th><td>"<b>列表项目</b>"</td></tr>
				<tr><th>Name:</th><td>"Inspect.exe"</td></tr>
				<tr><th>HasKeyboardFocus:</th><td>true</td></tr>
				<tr><th>IsKeyboardFocusable:</th><td>true</td></tr>
				<tr><th>IsEnabled:</th><td>true</td></tr>
				<tr><th>AutomationId:</th><td>"8"</td></tr>
				<tr><th>ClassName:</th><td>"UIItem"</td></tr>
				<tr><th>ClickablePoint:</th><td>{x:466 y:542}</td></tr>
				<tr><th>IsControlElement:</th><td>true</td></tr>
				<tr><th>IsContentElement:</th><td>true</td></tr>
				<tr><th>IsPassword:</th><td>false</td></tr>
				<tr><th>IsOffscreen:</th><td>false</td></tr>
				<tr><th>Orientation:</th><td>0</td></tr>
				<tr><th>FrameworkId:</th><td>"DirectUI"</td></tr>
				<tr><th>ItemStatus:</th><td>"<b>第</b> 9 <b>个项目</b>(<b>共</b> 11 <b>个</b>)"</td></tr>
				<tr><th>ProviderDescription:</th><td>"[pid:8164,providerId:0x0 Main(parent link):Unidentified Provider (unmanaged:explorerframe.dll)]"</td></tr>
				<tr><th>Value.IsReadOnly:</th><td>false</td></tr>
				<tr><th>Value.Value:</th><td>"Inspect.exe"</td></tr>
				<tr><th>SelectionItem.IsSelected:</th><td>true</td></tr>
				<tr><th>SelectionItem.SelectionContainer:</th><td class="far">"<b>项目视图</b>" <b>列表</b></td></tr>
				<tr><th>IsDockPatternAvailable:</th><td>false</td></tr>
				<tr><th>IsExpandCollapsePatternAvailable:</th><td class="far">false</td></tr>
				<tr><th>IsGridItemPatternAvailable:</th><td>false</td></tr>
			</tbody>
		</table>
		<div class="scroll"><div class="thumb"></div></div>
	</div>
</section>

<!-- annotations -->
<div class="mark"></div>
<svg class="arrow" width="350" height="240" viewBox="0 0 350 240"><path d="M1 238L332 8l-3-4 19-3-8 15-4-2L2 239z" fill="#fb3838"/></svg>
<div class="watermark">掘金技术社区 @ 北京_宏哥</div>

</body>
</html>
```
FILE: styles.css
```css
*{
	box-sizing: border-box;
}
body{
	margin: 0;
	height: 100vh;
	position: relative;
	overflow: hidden;
	display: flex;
	flex-direction: column;
	background: #fff;
	color: #1b1b1b;
	font: 15px "Open Sans", "Noto Sans CJK SC", sans-serif;
}
button, input, select{
	font: inherit;
	color: inherit;
	background: none;
	border: 0;
	padding: 0;
	margin: 0;
}
a{
	color: inherit;
	text-decoration: none;
}
svg{
	display: block;
	flex: none;
}
.defs{
	position: absolute;
}

/* tab strip */
.tabstrip{
	display: flex;
	height: 42px;
	flex: none;
	padding-left: 11px;
	background: #cbdfe5;
	border-bottom: 1px solid #bfced2;
}
.tab{
	display: flex;
	align-items: center;
	width: 300px;
	height: 39px;
	margin-top: 3px;
	padding: 0 20px 0 12px;
	background: #eff5f8;
	border-radius: 8px 8px 0 0;
}
.tab-title{
	flex: 1;
	padding-left: 12px;
}
.tab-new{
	display: flex;
	align-items: center;
	padding: 4px 22px 0;
}
.win-buttons{
	display: flex;
	margin-left: auto;
	padding-right: 4px;
}
.win-buttons button{
	width: 58px;
	height: 36px;
	display: flex;
	align-items: center;
	justify-content: center;
}

/* navigation */
.navbar{
	display: flex;
	align-items: center;
	flex: none;
	height: 61px;
	padding: 0 14px 0 4px;
	background: #eff3f7;
	border-bottom: 1px solid #bcc6ca;
}
.nav-btn{
	width: 60px;
	height: 40px;
	display: flex;
	align-items: center;
	justify-content: center;
}
.address{
	display: flex;
	align-items: center;
	flex: 1;
	gap: 21px;
	height: 40px;
	margin-left: 9px;
	padding-left: 17px;
	background: #fafcfe;
	border-radius: 5px;
	font-size: 17px;
	white-space: nowrap;
}
.search{
	display: flex;
	align-items: center;
	width: 478px;
	height: 40px;
	margin-left: 12px;
	padding: 0 17px;
	background: #fafcfe;
	border-radius: 5px;
}
.search input{
	flex: 1;
	outline: 0;
	font-size: 17px;
}
.search input::placeholder{
	color: #666;
	opacity: 1;
}

/* command bar */
.commands{
	display: flex;
	align-items: center;
	flex: none;
	height: 58px;
	padding: 2px 28px 0 0;
	border-bottom: 1px solid #c9cfcf;
}
.cmd{
	display: flex;
	align-items: center;
	gap: 10px;
	height: 40px;
	padding: 0 18px 0 19px;
}
.new{
	padding: 0 22px 0 23px;
}
.sep{
	width: 1px;
	height: 42px;
	background: #ececec;
}
.tool{
	width: 60px;
	height: 40px;
	display: flex;
	align-items: center;
	justify-content: center;
}
.tool + .sep{
	margin-left: 3px;
}
.arr{
	margin-left: -3px;
	color: #555;
}
.new + .sep{
	margin-left: -1px;
	margin-right: 2px;
}
.preview{
	margin-left: auto;
	padding: 0;
}

/* explorer */
.explorer{
	display: flex;
	flex: 1;
	min-height: 0;
}
.sidebar{
	width: 73px;
	padding-top: 8px;
	border-right: 1px solid #f0f0f0;
}
.sidebar hr{
	height: 40px;
	margin: 0 12px 0 13px;
	border: 0;
	background: linear-gradient(#d4d4d4, #d4d4d4) 0 20px / 100% 1px no-repeat;
}
.place{
	display: flex;
	align-items: center;
	height: 40px;
	margin-left: 3px;
	margin-right: 2px;
	padding-left: 40px;
	gap: 5px;
	overflow: hidden;
	white-space: nowrap;
}
.open{
	padding-left: 14px;
}
.tw{
	width: 10px;
	margin-right: 11px;
	color: #888;
}
.tw.dark{
	width: 12px;
	margin-right: 9px;
	color: #111;
}
.deep{
	padding-left: 24px;
}
.current{
	background: #d9d9d9;
	border-radius: 3px;
}
.files{
	flex: 1;
	padding-left: 9px;
}
.list{
	width: 763px;
	margin-top: -7px;
	table-layout: fixed;
	border-collapse: separate;
	border-spacing: 0 6px;
	color: #6d6d6d;
}
.c-gut{ width: 11px; }
.c-name{ width: 322px; }
.c-date{ width: 180px; }
.c-type{ width: 150px; }
.c-size{ width: 100px; }
.list th{
	height: 32px;
	padding: 0 7px;
	border-right: 1px solid #e2e2e2;
	font-weight: normal;
	text-align: left;
	color: #4c607a;
}
.list .h-name{
	padding-left: 19px;
}
.sorted{
	position: relative;
}
.sort{
	position: absolute;
	left: 84px;
	top: 0;
	color: #777;
}
.list td{
	height: 31px;
	padding: 0 7px;
	font-size: 16px;
	line-height: 20px;
	white-space: nowrap;
}
.list .zh, .list .size{
	font-size: 15px;
}
.list .group td{
	height: 27px;
	padding: 2px 0 0 2px;
	font-size: 15px;
}
.group button{
	display: flex;
	align-items: center;
	gap: 7px;
	color: #1e3287;
}
.group svg{
	color: #888;
}
.list td:first-child{
	padding: 0;
}
.list .name{
	display: flex;
	align-items: center;
	gap: 5px;
	padding-left: 5px;
	color: #1b1b1b;
}
.list .size{
	padding-right: 10px;
	text-align: right;
}
.selected td + td{
	background: #cce8ff;
	border: solid #111;
	border-width: 1px 0;
	color: #333;
}
.list .selected .name{
	border-left-width: 1px;
	padding-left: 4px;
}
.preview-pane{
	width: 345px;
	border-left: 1px solid #f5f5f5;
}

/* status bar */
.status{
	display: flex;
	align-items: center;
	flex: none;
	height: 30px;
	padding: 0 8px 4px 17px;
	gap: 25px;
	color: #1e395b;
}
.views{
	display: flex;
	align-self: flex-end;
	margin-left: auto;
	margin-bottom: -4px;
}
.views button{
	width: 28px;
	height: 24px;
	display: flex;
	align-items: center;
	justify-content: center;
}
.views .on{
	background: #cce8ff;
	border: 1px solid #1979ca;
}

/* Inspect window */
.inspect{
	position: absolute;
	left: 714px;
	right: 8px;
	top: 384px;
	bottom: 9px;
	display: flex;
	flex-direction: column;
	overflow: hidden;
	background: #fff;
	border: 1px solid #a9a9a9;
	border-radius: 10px 10px 6px 6px;
	box-shadow: 0 8px 30px rgba(0,0,0,0.32);
}
.i-title{
	display: flex;
	align-items: center;
	flex: none;
	height: 36px;
	padding-left: 9px;
	gap: 5px;
	background: #f3f3f3;
	color: #8f8f8f;
	font-size: 14px;
}
.i-title .win-buttons{
	padding-right: 1px;
}
.i-menu{
	display: flex;
	align-items: center;
	flex: none;
	height: 26px;
	padding-left: 9px;
	gap: 17px;
	color: #6d6d6d;
	font-size: 16px;
	line-height: 20px;
}
.i-tools{
	display: flex;
	align-items: center;
	flex: none;
	height: 28px;
	background: #f0f0f0;
	border-top: 1px solid #9a9a9a;
}
.i-tools button{
	width: 27px;
	height: 25px;
	display: flex;
	align-items: center;
	justify-content: center;
}
.i-tools .on{
	background: #cce8ff;
	border: 1px solid #99cdf5;
	border-radius: 2px;
}
.i-tools .navy{
	color: #191980;
}
.i-tools .dim{
	color: #a0a0a0;
}
.gap{
	width: 8px;
}
.combo{
	display: flex;
	align-items: center;
	width: 159px;
	height: 24px;
	padding: 0 4px 0 2px;
	background: #fff;
	border: 1px solid #d0d0d0;
	color: #666;
}
.combo select{
	flex: 1;
	appearance: none;
	outline: 0;
	color: #000;
	font: 13px "Liberation Mono", monospace;
}
.i-body{
	display: flex;
	flex: 1;
	min-height: 0;
	padding-left: 1px;
	border: solid #696969;
	border-width: 3px 2px 0 2px;
}
.props{
	flex: 1;
	width: 100%;
	align-self: flex-start;
	table-layout: fixed;
	margin-top: 2px;
	border-spacing: 0;
	color: #000;
	font: 13px "Liberation Mono", "Noto Sans CJK SC", monospace;
}
.p-key{
	width: 251px;
}
.props th, .props td{
	height: 19px;
	padding: 0;
	line-height: 19px;
	font-weight: normal;
	text-align: left;
	white-space: nowrap;
}
.props .far{
	padding-left: 50px;
}
.props b{
	font-size: 16px;
	font-weight: normal;
	line-height: 1;
}
.scroll{
	flex: none;
	width: 21px;
	padding: 21px 7px 0;
	background: #f0f0f0;
}
.thumb{
	height: 209px;
	background: #858585;
}

/* annotations drawn over everything */
.mark{
	position: absolute;
	left: 711px;
	top: 546px;
	width: 553px;
	height: 36px;
	border: 7px solid #fb3838;
}
.arrow{
	position: absolute;
	left: 354px;
	top: 578px;
}
.watermark{
	position: absolute;
	right: 26px;
	bottom: 20px;
	font: 25px/40px "Open Sans", "Noto Sans CJK SC", sans-serif;
	color: #e4e4e4;
	text-shadow: 1px 1px 1px #222;
}
```
